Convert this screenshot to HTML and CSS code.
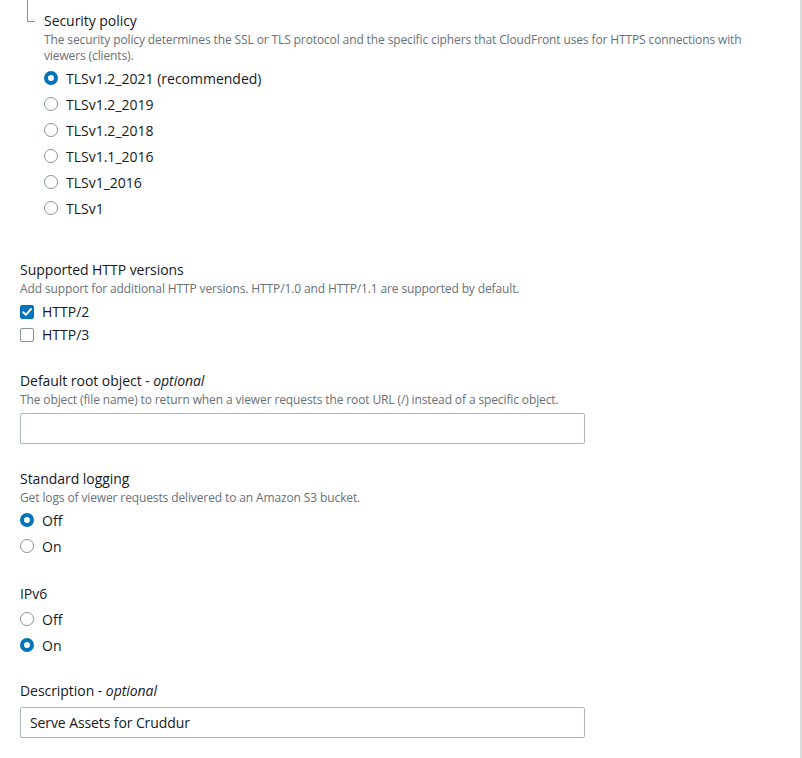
FILE: index.html
```html
<!DOCTYPE html>
<html lang="en">
<head>
<meta charset="utf-8">
<title>Settings</title>
<link rel="stylesheet" href="styles.css">
</head>
<body>
<div class="page">
  <div class="nested">
    <div class="connector"></div>
    <div class="nested-body">
      <div class="label">Security policy</div>
      <div class="desc">The security policy determines the SSL or TLS protocol and the specific ciphers that CloudFront uses for HTTPS connections with viewers (clients).</div>
      <div class="radios">
        <label class="radio"><span class="dot on"></span><span>TLSv1.2_2021 (recommended)</span></label>
        <label class="radio"><span class="dot"></span><span>TLSv1.2_2019</span></label>
        <label class="radio"><span class="dot"></span><span>TLSv1.2_2018</span></label>
        <label class="radio"><span class="dot"></span><span>TLSv1.1_2016</span></label>
        <label class="radio"><span class="dot"></span><span>TLSv1_2016</span></label>
        <label class="radio"><span class="dot"></span><span>TLSv1</span></label>
      </div>
    </div>
  </div>

  <div class="field first">
    <div class="label">Supported HTTP versions</div>
    <div class="desc">Add support for additional HTTP versions. HTTP/1.0 and HTTP/1.1 are supported by default.</div>
    <div class="checks">
      <label class="check"><span class="box on"><svg viewBox="0 0 14 14" width="14" height="14"><path d="M3.2 7.2 L5.9 9.9 L10.9 4.1" fill="none" stroke="#fff" stroke-width="2" stroke-linecap="round" stroke-linejoin="round"/></svg></span><span>HTTP/2</span></label>
      <label class="check"><span class="box"></span><span>HTTP/3</span></label>
    </div>
  </div>

  <div class="field">
    <div class="label">Default root object - <i>optional</i></div>
    <div class="desc">The object (file name) to return when a viewer requests the root URL (/) instead of a specific object.</div>
    <div class="input"></div>
  </div>

  <div class="field">
    <div class="label">Standard logging</div>
    <div class="desc">Get logs of viewer requests delivered to an Amazon S3 bucket.</div>
    <div class="radios">
      <label class="radio"><span class="dot on"></span><span>Off</span></label>
      <label class="radio"><span class="dot"></span><span>On</span></label>
    </div>
  </div>

  <div class="field">
    <div class="label">IPv6</div>
    <div class="radios">
      <label class="radio"><span class="dot"></span><span>Off</span></label>
      <label class="radio"><span class="dot on"></span><span>On</span></label>
    </div>
  </div>

  <div class="field tight">
    <div class="label">Description - <i>optional</i></div>
    <div class="input filled">Serve Assets for Cruddur</div>
  </div>
</div>
</body>
</html>
```
FILE: styles.css
```css
html, body {
  margin: 0;
  padding: 0;
  background: #fff;
}
body {
  font-family: "Open Sans", "Noto Sans", sans-serif;
  color: #16191f;
  font-size: 14px;
}
.page {
  width: 780px;
  height: 758px;
  padding-left: 20px;
  border-right: 2px solid #d9dede;
  overflow: hidden;
}
.nested {
  display: flex;
  padding-bottom: 16px;
}
.connector {
  width: 7px;
  height: 21px;
  margin-left: 7px;
  border-left: 1px solid #879596;
  border-bottom: 1px solid #879596;
  flex: none;
}
.nested-body {
  margin-left: 9px;
  padding-top: 10px;
  width: 716px;
}
.label {
  font-size: 14px;
  line-height: 22px;
  color: #16191f;
  letter-spacing: -0.05px;
}
.label i {
  font-style: italic;
}
.desc {
  font-size: 12px;
  line-height: 16px;
  color: #687078;
  letter-spacing: -0.12px;
}
.radios {
  display: flex;
  flex-direction: column;
  padding-top: 1px;
}
.radio {
  display: flex;
  align-items: center;
  height: 26px;
  gap: 8px;
  font-size: 14px;
}
.dot {
  width: 14px;
  height: 14px;
  box-sizing: border-box;
  border-radius: 50%;
  border: 1px solid #879596;
  background: #fff;
  flex: none;
}
.dot.on {
  border: 4px solid #0073bb;
}
.field {
  margin-top: 24px;
}
.field.first,
.field.tight {
  margin-top: 22px;
}
.checks {
  display: flex;
  flex-direction: column;
  padding-top: 3px;
}
.check {
  display: flex;
  align-items: center;
  height: 23px;
  gap: 8px;
}
.box {
  width: 14px;
  height: 14px;
  box-sizing: border-box;
  border: 1px solid #879596;
  border-radius: 2px;
  flex: none;
  display: flex;
}
.box.on {
  background: #0073bb;
  border-color: #0073bb;
}
.box svg {
  margin: -1px;
}
.input {
  margin-top: 5px;
  width: 565px;
  height: 31px;
  box-sizing: border-box;
  border: 1px solid #aab7b8;
  border-radius: 2px;
  padding: 0 9px;
  line-height: 29px;
  font-size: 14px;
  letter-spacing: -0.1px;
}
```
